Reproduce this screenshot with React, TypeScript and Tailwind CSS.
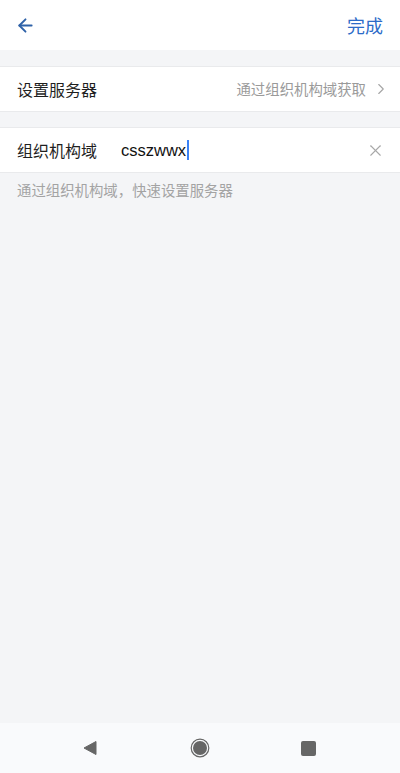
import { ArrowLeft, ChevronRight, X } from "lucide-react"

const font = { fontFamily: '"Noto Sans CJK SC", "Noto Sans", sans-serif' }

export default function App() {
  return (
    <div className="w-[400px] h-[773px] flex flex-col bg-[#f4f5f7] overflow-hidden" style={font}>
      <header className="h-[50px] bg-white flex items-center justify-between pl-[15px] pr-[17px]">
        <ArrowLeft className="w-[21px] h-[21px] text-[#2f62a8]" strokeWidth={2.2} />
        <span className="text-[18px] text-[#2c6bc8]">完成</span>
      </header>

      <div className="mt-[16px] h-[46px] bg-white border-y border-[#e9eaec] flex items-center pl-[17px] pr-[10px]">
        <span className="text-[16px] text-[#1f1f1f]">设置服务器</span>
        <span className="ml-auto text-[14.4px] text-[#9a9a9a]">通过组织机构域获取</span>
        <ChevronRight className="ml-[6px] w-[18px] h-[18px] text-[#a5a5a5]" strokeWidth={1.5} />
      </div>

      <div className="mt-[15px] h-[46px] bg-white border-y border-[#e9eaec] flex items-center pl-[17px] pr-[15px]">
        <span className="text-[16px] text-[#1f1f1f] w-[104px]">组织机构域</span>
        <span className="text-[16.5px] text-[#111] font-['Liberation_Sans',sans-serif] flex items-center">
          csszwwx
          <span className="inline-block w-[1.5px] h-[20px] bg-[#3b82f6] ml-[1px]" />
        </span>
        <X className="ml-auto w-[19px] h-[19px] text-[#a8a8a8]" strokeWidth={1.4} />
      </div>

      <p className="pl-[17px] mt-[6px] text-[14.4px] text-[#a3a3a3]">通过组织机构域，快速设置服务器</p>

      <div className="flex-1" />

      <nav className="h-[50px] bg-[#f9fafc] flex items-center pl-[82px]">
        <svg width="16" height="16" viewBox="0 0 16 16">
          <path d="M14 1.5 L14 14.5 L2 8 Z" fill="#666" stroke="#666" strokeWidth="1" strokeLinejoin="round" />
        </svg>
        <svg width="20" height="20" viewBox="0 0 20 20" className="ml-[92px]">
          <circle cx="10" cy="10" r="8.8" fill="none" stroke="#666" strokeWidth="1.2" />
          <circle cx="10" cy="10" r="7" fill="#666" />
        </svg>
        <div className="w-[15px] h-[15px] rounded-[2px] bg-[#666] ml-[91px]" />
      </nav>
    </div>
  )
}
